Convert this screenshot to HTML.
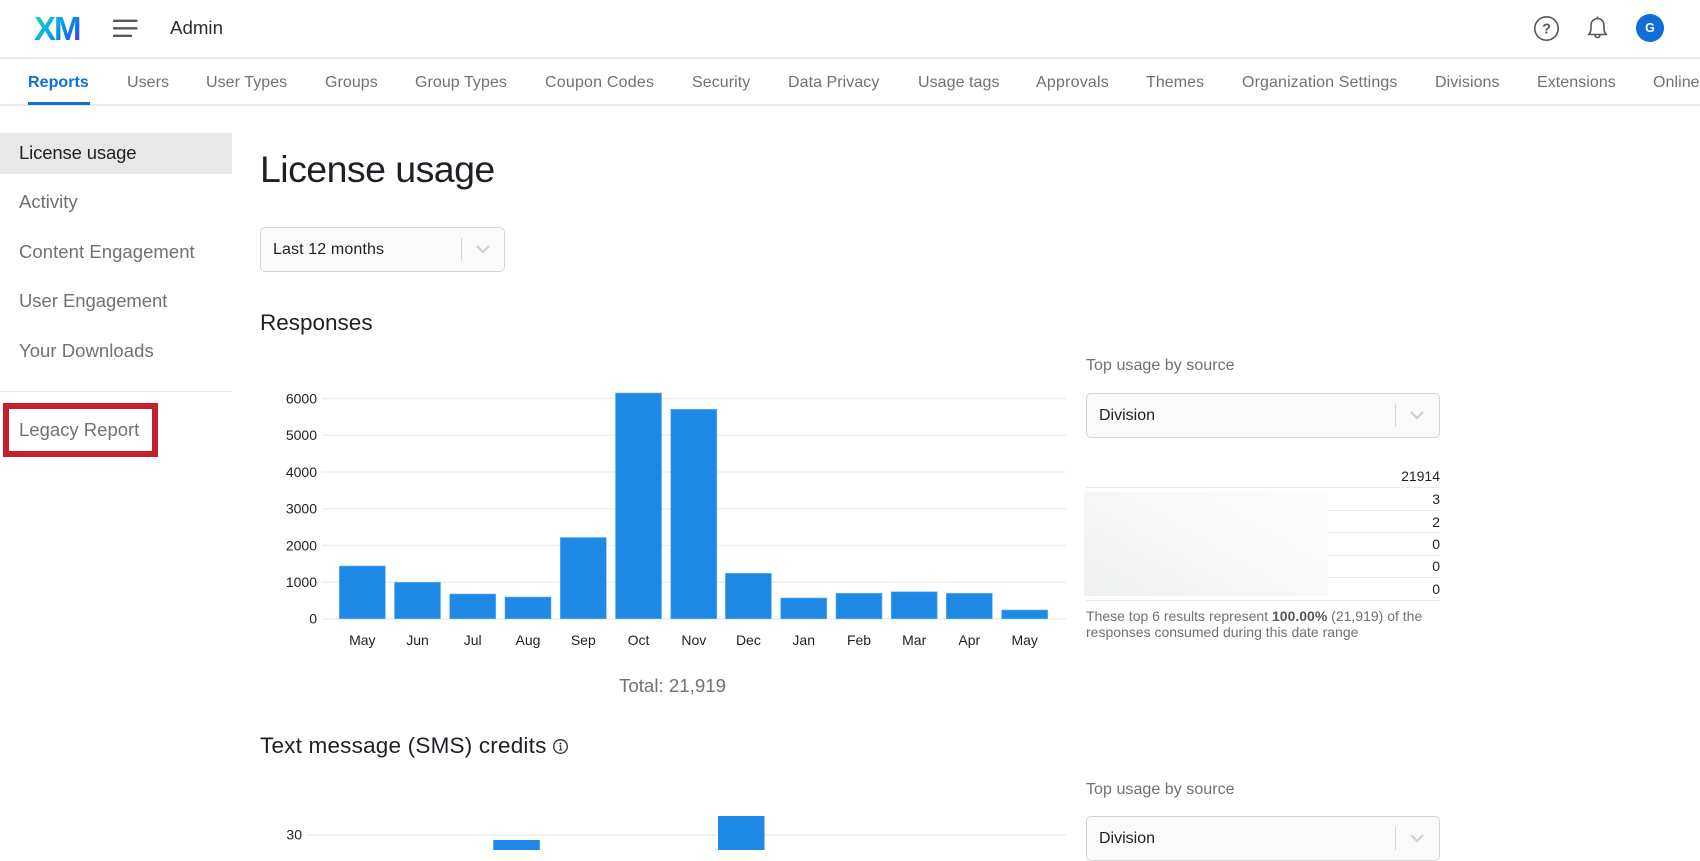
<!DOCTYPE html>
<html lang="en"><head><meta charset="utf-8"><title>License usage</title>
<style>
html,body{margin:0;padding:0;background:#fff}
body{width:1700px;height:850px;overflow:hidden;position:relative;font-family:"Liberation Sans",Arial,sans-serif;color:#1f2025}
.a{position:absolute;white-space:nowrap;line-height:1}
.line{position:absolute;background:#e9eaeb;height:1px}
.tab{position:absolute;top:74px;font-size:16px;letter-spacing:.06px;line-height:18px;color:#6f7175;white-space:nowrap}
.side{position:absolute;left:19px;font-size:18.5px;line-height:22px;color:#6f7175;white-space:nowrap}
.dd{position:absolute;box-sizing:border-box;background:#fafafa;border:1.5px solid #d4d5d8;border-radius:5px;height:45px}
.dd span{position:absolute;left:12px;top:13px;font-size:16px;line-height:18px;color:#1f2025}
.dd i{position:absolute;top:10px;width:1px;height:23px;background:#d4d5d8}
.dd svg{position:absolute;top:16px}
.h2{position:absolute;left:260px;font-size:22.5px;line-height:26px;color:#1f2025;white-space:nowrap}
.lbl{position:absolute;left:1086px;font-size:16px;letter-spacing:.05px;line-height:18px;color:#6f7175;white-space:nowrap}
.n{position:absolute;right:260px;font-size:14px;line-height:16px;color:#1f2025}
.xm{position:absolute;left:34px;top:11px;font-size:33px;line-height:36px;font-weight:bold;letter-spacing:-2px;background:linear-gradient(135deg,#22d9b0 5%,#07a6f2 45%,#1070e8 72%,#6a2be0 95%);-webkit-background-clip:text;background-clip:text;color:transparent;-webkit-text-fill-color:transparent;white-space:nowrap}
</style></head><body>

<div class="xm">XM</div>
<svg class="a" style="left:113px;top:19px" width="25" height="19" viewBox="0 0 25 19"><path d="M1 1.800h22.500M1 9.300h22.500M1 16.800h17" stroke="#55575b" stroke-width="2.400" fill="none" stroke-linecap="round"/></svg>
<div class="a" style="left:170px;top:17px;font-size:18.7px;line-height:21px;color:#2d2e32">Admin</div>

<svg class="a" style="left:1533px;top:15px" width="27" height="27" viewBox="0 0 27 27" font-family="Liberation Sans, Arial, sans-serif"><circle cx="13.500" cy="13.500" r="11.700" fill="none" stroke="#55575b" stroke-width="1.600"/><text x="13.500" y="18.500" text-anchor="middle" font-size="14.500" font-weight="bold" fill="#55575b">?</text></svg>
<svg class="a" style="left:1587px;top:15px" width="21" height="25" viewBox="0 0 21 25"><path d="M1.500 19.500c1.800-1.500 2.500-3 2.500-6V10a6.500 6.500 0 0 1 13 0v3.500c0 3 .7 4.500 2.500 6zM10.500 3.500V1.500M8 20a2.500 2.500 0 0 0 5 0" fill="none" stroke="#55575b" stroke-width="1.600" stroke-linejoin="round"/></svg>
<div class="a" style="left:1636px;top:14px;width:28px;height:28px;border-radius:50%;background:#0f6fd6;color:#fff;font-size:12.500px;font-weight:bold;line-height:28px;text-align:center">G</div>

<div class="line" style="left:0;top:57px;width:1700px;height:1.500px"></div>
<div class="tab" style="left:28px;color:#0f6fd6;font-weight:bold">Reports</div>
<div class="tab" style="left:127px">Users</div>
<div class="tab" style="left:206px">User Types</div>
<div class="tab" style="left:325px">Groups</div>
<div class="tab" style="left:415px">Group Types</div>
<div class="tab" style="left:545px;letter-spacing:.2px">Coupon Codes</div>
<div class="tab" style="left:692px">Security</div>
<div class="tab" style="left:788px">Data Privacy</div>
<div class="tab" style="left:918px">Usage tags</div>
<div class="tab" style="left:1036px;letter-spacing:.2px">Approvals</div>
<div class="tab" style="left:1146px">Themes</div>
<div class="tab" style="left:1242px;letter-spacing:.12px">Organization Settings</div>
<div class="tab" style="left:1435px">Divisions</div>
<div class="tab" style="left:1537px">Extensions</div>
<div class="tab" style="left:1653px">Online</div>
<div class="line" style="left:0;top:104px;width:1700px;height:1.500px"></div>
<div class="a" style="left:28px;top:102px;width:62px;height:3px;background:#0f6fd6"></div>

<div class="a" style="left:0;top:133px;width:231.500px;height:40.500px;background:#e8e8e8"></div>
<div class="side" style="top:142px;color:#1f2025;letter-spacing:-.15px">License usage</div>
<div class="side" style="top:191px">Activity</div>
<div class="side" style="top:241px;letter-spacing:.05px">Content Engagement</div>
<div class="side" style="top:290px;letter-spacing:-.05px">User Engagement</div>
<div class="side" style="top:340px;letter-spacing:.05px">Your Downloads</div>
<div class="line" style="left:0;top:391px;width:231.500px"></div>
<div class="side" style="top:419px">Legacy Report</div>
<div class="a" style="left:3px;top:403px;width:155px;height:54px;box-sizing:border-box;border:6px solid #c4202f"></div>

<div class="a" style="left:260px;top:147px;font-size:37.5px;letter-spacing:-.55px;line-height:44px;color:#1f2025">License usage</div>
<div class="dd" style="left:260px;top:227px;width:245px"><span style="letter-spacing:.12px">Last 12 months</span><i style="left:200px"></i><svg style="left:214px" width="16" height="10" viewBox="0 0 16 10"><path d="M2 2l6 6 6-6" fill="none" stroke="#cfd0d3" stroke-width="2.200"/></svg></div>
<div class="h2" style="left:260px;top:310px">Responses</div>

<svg class="a" style="left:0;top:380px" width="1080" height="280" viewBox="0 380 1080 280" font-family="Liberation Sans, Arial, sans-serif" font-size="14" fill="#1f2025">
<g stroke="#ececee" stroke-width="1.300"><path d="M322 398.500H1066M322 435.200H1066M322 472H1066M322 508.800H1066M322 545.500H1066M322 582.200H1066M322 618.800H1066"/></g>
<g fill="#1e88e5" stroke="#64b5f6" stroke-width=".6">
<rect x="339.300" y="566" width="46" height="52.800"/>
<rect x="394.500" y="582.300" width="46" height="36.500"/>
<rect x="449.700" y="594" width="46" height="24.800"/>
<rect x="505" y="597" width="46" height="21.800"/>
<rect x="560.300" y="537.500" width="46" height="81.300"/>
<rect x="615.500" y="393" width="46" height="225.800"/>
<rect x="670.800" y="409.300" width="46" height="209.500"/>
<rect x="725.400" y="573.300" width="46" height="45.500"/>
<rect x="780.700" y="598" width="46" height="20.800"/>
<rect x="836" y="593.300" width="46" height="25.500"/>
<rect x="891.200" y="591.800" width="46" height="27"/>
<rect x="946.300" y="593.300" width="46" height="25.500"/>
<rect x="1001.700" y="610" width="46" height="8.800"/>
</g>
<g text-anchor="end">
<text x="317" y="403.500">6000</text><text x="317" y="440">5000</text><text x="317" y="477">4000</text><text x="317" y="513.500">3000</text><text x="317" y="550.500">2000</text><text x="317" y="587">1000</text><text x="317" y="623.500">0</text>
</g>
<g text-anchor="middle">
<text x="362.300" y="645">May</text><text x="417.500" y="645">Jun</text><text x="472.700" y="645">Jul</text><text x="528" y="645">Aug</text><text x="583.300" y="645">Sep</text><text x="638.500" y="645">Oct</text><text x="693.800" y="645">Nov</text><text x="748.400" y="645">Dec</text><text x="803.700" y="645">Jan</text><text x="859" y="645">Feb</text><text x="914.200" y="645">Mar</text><text x="969.300" y="645">Apr</text><text x="1024.700" y="645">May</text>
</g>
</svg>
<div class="a" style="left:619px;top:676px;font-size:18.7px;line-height:19px;color:#6f7175">Total: 21,919</div>

<div class="lbl" style="top:357px">Top usage by source</div>
<div class="dd" style="left:1086px;top:393px;width:354px"><span>Division</span><i style="left:308px"></i><svg style="left:322px" width="16" height="10" viewBox="0 0 16 10"><path d="M2 2l6 6 6-6" fill="none" stroke="#cfd0d3" stroke-width="2.200"/></svg></div>

<div class="n" style="top:468px">21914</div>
<div class="line" style="left:1086px;top:487px;width:354px"></div>
<div class="n" style="top:491px">3</div>
<div class="line" style="left:1086px;top:510px;width:354px"></div>
<div class="n" style="top:514px">2</div>
<div class="line" style="left:1086px;top:532px;width:354px"></div>
<div class="n" style="top:536px">0</div>
<div class="line" style="left:1086px;top:555px;width:354px"></div>
<div class="n" style="top:558px">0</div>
<div class="line" style="left:1086px;top:577px;width:354px"></div>
<div class="n" style="top:581px">0</div>
<div class="line" style="left:1086px;top:600px;width:354px"></div>
<div class="a" style="left:1084px;top:492px;width:244px;height:104px;background:linear-gradient(30deg,#eff0f1,#f8f8f8 55%,#fcfcfc)"></div>
<div class="a" style="left:1086px;top:609px;font-size:14px;line-height:15.500px;color:#6f7175;white-space:normal;width:356px">These top 6 results represent <b style="color:#55575b">100.00%</b> (21,919) of the<br>responses consumed during this date range</div>

<div class="h2" style="top:733px;letter-spacing:.2px">Text message (SMS) credits</div>
<svg class="a" style="left:552px;top:738px" width="17" height="17" viewBox="0 0 17 17"><circle cx="8.500" cy="8.500" r="6.800" fill="none" stroke="#2d2e32" stroke-width="1.300"/><circle cx="8.500" cy="5.500" r="1" fill="#2d2e32"/><path d="M7.300 7.800h1.400v4M7 12h3" stroke="#2d2e32" stroke-width="1.100" fill="none"/></svg>

<svg class="a" style="left:0;top:800px" width="1080" height="50" viewBox="0 800 1080 50" font-family="Liberation Sans, Arial, sans-serif" font-size="14" fill="#1f2025">
<path d="M306 835H1066" stroke="#ececee" stroke-width="1.300"/>
<rect x="493.300" y="840" width="46.500" height="12" fill="#1e88e5"/>
<rect x="718" y="816" width="46.500" height="36" fill="#1e88e5"/>
<text x="302" y="839.500" text-anchor="end">30</text>
</svg>
<div class="lbl" style="top:780.500px">Top usage by source</div>
<div class="dd" style="left:1086px;top:816px;width:354px"><span>Division</span><i style="left:308px"></i><svg style="left:322px" width="16" height="10" viewBox="0 0 16 10"><path d="M2 2l6 6 6-6" fill="none" stroke="#cfd0d3" stroke-width="2.200"/></svg></div>
</body></html>
